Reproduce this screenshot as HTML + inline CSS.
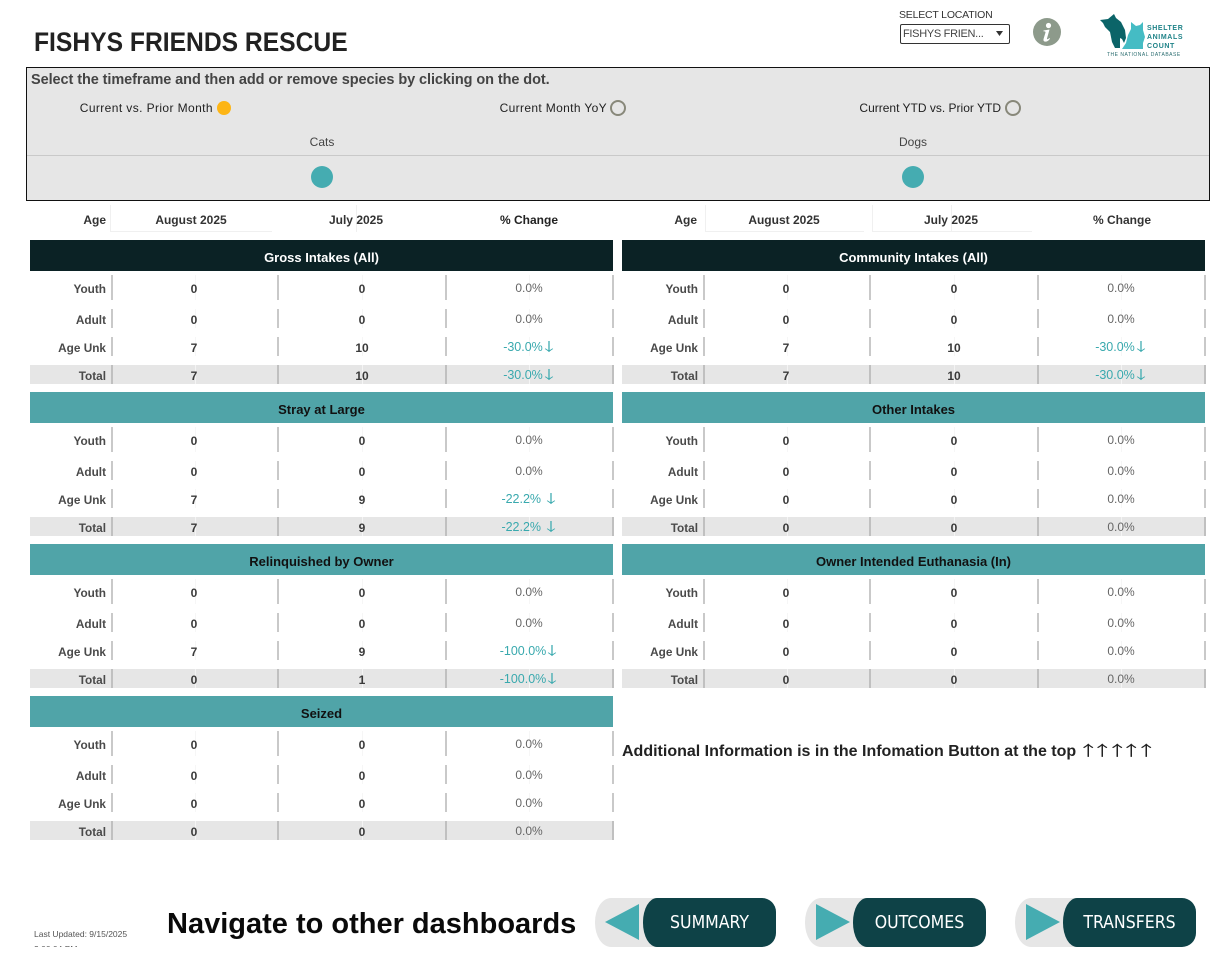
<!DOCTYPE html>
<html lang="en"><head><meta charset="utf-8"><title>Fishys Friends Rescue</title>
<style>
html,body{margin:0;padding:0;background:#fff}
#p{position:relative;width:1230px;height:959px;overflow:hidden;background:#fff;font-family:"Liberation Sans",sans-serif;color:#333}
#p div,#p span{position:absolute;white-space:nowrap}
.t{line-height:16px;height:16px}
.ctr{text-align:center;width:240px}
.rt{text-align:right;width:200px}
.pn{width:584px;height:144px}
.h{left:0;top:0;width:583px;height:31px;line-height:35px;text-align:center;font-size:13px;font-weight:700;background:#50a4a8;color:#111}
.h.d{background:#0b2225;color:#fff}
.r{left:0;width:584px;background-repeat:no-repeat;font-size:12px;
background-image:linear-gradient(#c9c9c9,#c9c9c9),linear-gradient(#c9c9c9,#c9c9c9),linear-gradient(#c9c9c9,#c9c9c9),linear-gradient(#c9c9c9,#c9c9c9),linear-gradient(#f6f6f6,#f6f6f6),linear-gradient(#f6f6f6,#f6f6f6),linear-gradient(#f6f6f6,#f6f6f6);
background-size:2px 100%,2px 100%,2px 100%,2px 100%,1px 100%,1px 100%,1px 100%;
background-position:81px 0,247px 0,415px 0,582px 0,165px 0,332px 0,499px 0}
.r1{top:35px;height:25px;line-height:26px}
.r2{top:69px;height:19px;line-height:21px}
.r3{top:97px;height:19px;line-height:21px}
.r4{top:125px;height:19px;line-height:21px;background-color:#e6e6e6;
background-image:linear-gradient(#c0c0c0,#c0c0c0),linear-gradient(#c0c0c0,#c0c0c0),linear-gradient(#c0c0c0,#c0c0c0),linear-gradient(#c0c0c0,#c0c0c0),linear-gradient(#f4f4f4,#f4f4f4),linear-gradient(#f4f4f4,#f4f4f4),linear-gradient(#f4f4f4,#f4f4f4)}
.r span{top:0}
.r span.a,.r span.b{top:1px}
.l{left:0;width:76px;text-align:right;color:#4a4a4a;font-weight:700;font-size:11.800px}
.r span.l{top:1px}
.a,.b{width:100px;text-align:center;font-weight:700;color:#3a3a3a;font-size:12px}
.a{left:114px}.b{left:282px}
.c{left:449px;width:100px;text-align:center;color:#666;font-size:12px}
.c.g{color:#39a9ae;font-size:12.500px}
i{font-style:normal;font-family:"Noto Sans CJK JP",sans-serif;line-height:0;display:inline-block;transform:scaleX(1.5)}
.c.g i{font-size:12px}
.up{font-weight:400;font-size:14.500px}
.hd{font-size:12px;font-weight:700;color:#333;top:212px}
.ln{background:#f0f0f0}
.btn{height:49px;top:898px}
.gy{background:#e6e6e6;width:70px;border-radius:16px 0 0 16px / 24px 0 0 24px}
.dk{background:#0e4247;width:133px;border-radius:14px 14px 14px 14px / 24px 14px 14px 24px;color:#fff;text-align:center;line-height:51px;font-size:17.500px;font-family:"DejaVu Sans Condensed","DejaVu Sans","Liberation Sans",sans-serif}
</style></head><body><div id="p">

<div class="t" style="left:34px;top:26px;height:32px;line-height:32px;font-size:27px;font-weight:700;color:#222;transform:scaleX(.913);transform-origin:0 50%">FISHYS FRIENDS RESCUE</div>

<div class="t" style="left:899px;top:7px;font-size:10.500px;letter-spacing:-.2px;color:#333">SELECT LOCATION</div>
<div style="left:900px;top:24px;width:108px;height:18px;border:1px solid #333;border-radius:2px;background:#fff"></div>
<div class="t" style="left:903px;top:26px;font-size:11px;letter-spacing:-.3px;color:#444">FISHYS FRIEN...</div>
<svg style="position:absolute;left:996px;top:31px" width="8" height="6"><path d="M0 0H7L3.500 5Z" fill="#333"/></svg>

<svg style="position:absolute;left:1033px;top:18px" width="28" height="28" viewBox="0 0 28 28">
<circle cx="14" cy="14" r="14" fill="#8d9a8b"/>
<circle cx="15.500" cy="7.500" r="2.600" fill="#fff"/>
<path d="M10.500 12.500L16.500 11.500L14 20.500C13.800 21.500 14.800 21.500 16.500 20L17 20.800C15 23.500 13 24 11.500 23.500C10.300 23 10.300 21.800 10.700 20.500L12.500 14.500C12.700 13.500 11.800 13.300 10.500 13.400Z" fill="#fff"/>
</svg>

<svg style="position:absolute;left:1095px;top:10px" width="95" height="50" viewBox="0 0 95 50">
<path d="M5 10L13 9L19 4L21 8L26 12L30 20L31 28L29 33L27 29L25 28L25 38L20 38L17 32L15 22L10 17L8 13Z" fill="#0b6468"/>
<path d="M27 39L31 33L33 25L36 19L36 12L41 16L45 15L48 12L48 20L50 27L48 33L48 39Z" fill="#45bcc4"/>
<text x="52" y="20" font-family="Liberation Sans,sans-serif" font-size="7" font-weight="700" letter-spacing=".6" fill="#1f8388">SHELTER</text>
<text x="52" y="29" font-family="Liberation Sans,sans-serif" font-size="7" font-weight="700" letter-spacing=".6" fill="#1f8388">ANIMALS</text>
<text x="52" y="38" font-family="Liberation Sans,sans-serif" font-size="7" font-weight="700" letter-spacing=".6" fill="#1f8388">COUNT</text>
<text x="12" y="46" font-family="Liberation Sans,sans-serif" font-size="5" letter-spacing=".5" fill="#2b6d70">THE NATIONAL DATABASE</text>
</svg>

<div style="left:26px;top:67px;width:1182px;height:132px;border:1px solid #111;background:#e6e6e6"></div>
<div style="left:27px;top:155px;width:1182px;height:1px;background:#c9c9c9"></div>
<div class="t" style="left:31px;top:72px;font-size:14.500px;letter-spacing:-.08px;font-weight:700;color:#444">Select the timeframe and then add or remove species by clicking on the dot.</div>
<div class="t rt" style="left:13px;top:100px;font-size:12px;letter-spacing:.4px;color:#222">Current vs. Prior Month</div>
<div style="left:217px;top:101px;width:14px;height:14px;border-radius:50%;background:#fdb515"></div>
<div class="t rt" style="left:407px;top:100px;font-size:12px;letter-spacing:.35px;color:#222">Current Month YoY</div>
<div style="left:610px;top:100px;width:12px;height:12px;border-radius:50%;border:2px solid #88887a"></div>
<div class="t rt" style="left:801px;top:100px;font-size:12px;color:#222">Current YTD vs. Prior YTD</div>
<div style="left:1005px;top:100px;width:12px;height:12px;border-radius:50%;border:2px solid #88887a"></div>
<div class="t ctr" style="left:202px;top:134px;font-size:12px;color:#444">Cats</div>
<div class="t ctr" style="left:793px;top:134px;font-size:12px;color:#444">Dogs</div>
<div style="left:311px;top:166px;width:22px;height:22px;border-radius:50%;background:#45acb1"></div>
<div style="left:902px;top:166px;width:22px;height:22px;border-radius:50%;background:#45acb1"></div>

<div class="ln" style="left:110px;top:205px;width:1px;height:27px"></div>
<div class="ln" style="left:110px;top:231px;width:162px;height:1px"></div>
<div class="ln" style="left:356px;top:205px;width:1px;height:27px"></div>
<div class="ln" style="left:705px;top:205px;width:1px;height:27px"></div>
<div class="ln" style="left:705px;top:231px;width:159px;height:1px"></div>
<div class="ln" style="left:872px;top:205px;width:1px;height:27px"></div>
<div class="ln" style="left:872px;top:231px;width:160px;height:1px"></div>
<div class="ln" style="left:951px;top:205px;width:1px;height:27px"></div>
<div class="t hd rt" style="left:-94px">Age</div>
<div class="t hd ctr" style="left:71px">August 2025</div>
<div class="t hd ctr" style="left:236px">July 2025</div>
<div class="t hd ctr" style="left:409px;color:#222">% Change</div>
<div class="t hd rt" style="left:497px">Age</div>
<div class="t hd ctr" style="left:664px">August 2025</div>
<div class="t hd ctr" style="left:831px">July 2025</div>
<div class="t hd ctr" style="left:1002px">% Change</div>

<div class="pn" style="left:30px;top:240px"><div class="h d">Gross Intakes (All)</div>
<div class="r r1"><span class="l">Youth</span><span class="a">0</span><span class="b">0</span><span class="c">0.0%</span></div>
<div class="r r2"><span class="l">Adult</span><span class="a">0</span><span class="b">0</span><span class="c">0.0%</span></div>
<div class="r r3"><span class="l">Age Unk</span><span class="a">7</span><span class="b">10</span><span class="c g">-30.0%<i>↓</i></span></div>
<div class="r r4"><span class="l">Total</span><span class="a">7</span><span class="b">10</span><span class="c g">-30.0%<i>↓</i></span></div></div>

<div class="pn" style="left:622px;top:240px"><div class="h d">Community Intakes (All)</div>
<div class="r r1"><span class="l">Youth</span><span class="a">0</span><span class="b">0</span><span class="c">0.0%</span></div>
<div class="r r2"><span class="l">Adult</span><span class="a">0</span><span class="b">0</span><span class="c">0.0%</span></div>
<div class="r r3"><span class="l">Age Unk</span><span class="a">7</span><span class="b">10</span><span class="c g">-30.0%<i>↓</i></span></div>
<div class="r r4"><span class="l">Total</span><span class="a">7</span><span class="b">10</span><span class="c g">-30.0%<i>↓</i></span></div></div>

<div class="pn" style="left:30px;top:392px"><div class="h">Stray at Large</div>
<div class="r r1"><span class="l">Youth</span><span class="a">0</span><span class="b">0</span><span class="c">0.0%</span></div>
<div class="r r2"><span class="l">Adult</span><span class="a">0</span><span class="b">0</span><span class="c">0.0%</span></div>
<div class="r r3"><span class="l">Age Unk</span><span class="a">7</span><span class="b">9</span><span class="c g">-22.2% <i>↓</i></span></div>
<div class="r r4"><span class="l">Total</span><span class="a">7</span><span class="b">9</span><span class="c g">-22.2% <i>↓</i></span></div></div>

<div class="pn" style="left:622px;top:392px"><div class="h">Other Intakes</div>
<div class="r r1"><span class="l">Youth</span><span class="a">0</span><span class="b">0</span><span class="c">0.0%</span></div>
<div class="r r2"><span class="l">Adult</span><span class="a">0</span><span class="b">0</span><span class="c">0.0%</span></div>
<div class="r r3"><span class="l">Age Unk</span><span class="a">0</span><span class="b">0</span><span class="c">0.0%</span></div>
<div class="r r4"><span class="l">Total</span><span class="a">0</span><span class="b">0</span><span class="c">0.0%</span></div></div>

<div class="pn" style="left:30px;top:544px"><div class="h">Relinquished by Owner</div>
<div class="r r1"><span class="l">Youth</span><span class="a">0</span><span class="b">0</span><span class="c">0.0%</span></div>
<div class="r r2"><span class="l">Adult</span><span class="a">0</span><span class="b">0</span><span class="c">0.0%</span></div>
<div class="r r3"><span class="l">Age Unk</span><span class="a">7</span><span class="b">9</span><span class="c g">-100.0%<i>↓</i></span></div>
<div class="r r4"><span class="l">Total</span><span class="a">0</span><span class="b">1</span><span class="c g">-100.0%<i>↓</i></span></div></div>

<div class="pn" style="left:622px;top:544px"><div class="h">Owner Intended Euthanasia (In)</div>
<div class="r r1"><span class="l">Youth</span><span class="a">0</span><span class="b">0</span><span class="c">0.0%</span></div>
<div class="r r2"><span class="l">Adult</span><span class="a">0</span><span class="b">0</span><span class="c">0.0%</span></div>
<div class="r r3"><span class="l">Age Unk</span><span class="a">0</span><span class="b">0</span><span class="c">0.0%</span></div>
<div class="r r4"><span class="l">Total</span><span class="a">0</span><span class="b">0</span><span class="c">0.0%</span></div></div>

<div class="pn" style="left:30px;top:696px"><div class="h">Seized</div>
<div class="r r1"><span class="l">Youth</span><span class="a">0</span><span class="b">0</span><span class="c">0.0%</span></div>
<div class="r r2"><span class="l">Adult</span><span class="a">0</span><span class="b">0</span><span class="c">0.0%</span></div>
<div class="r r3"><span class="l">Age Unk</span><span class="a">0</span><span class="b">0</span><span class="c">0.0%</span></div>
<div class="r r4"><span class="l">Total</span><span class="a">0</span><span class="b">0</span><span class="c">0.0%</span></div></div>

<div class="t" style="left:622px;top:742px;height:20px;line-height:20px;font-size:16px;font-weight:700;color:#222">Additional Information is in the Infomation Button at the top <i class="up">↑</i><i class="up">↑</i><i class="up">↑</i><i class="up">↑</i><i class="up">↑</i></div>

<div style="left:34px;top:927px;width:120px;height:20px;overflow:hidden;font-size:8.500px;line-height:15px;color:#555;white-space:normal">Last Updated: 9/15/2025<br>3:00:04 PM</div>
<div class="t" style="left:167px;top:906px;height:36px;line-height:36px;font-size:29px;font-weight:700;color:#0a0a0a">Navigate to other dashboards</div>

<div class="btn gy" style="left:595px"></div>
<svg style="position:absolute;left:605px;top:904px" width="35" height="36"><path d="M0 18L34 0V36Z" fill="#45acb1"/></svg>
<div class="btn dk" style="left:643px">SUMMARY</div>

<div class="btn gy" style="left:805px"></div>
<svg style="position:absolute;left:815px;top:904px" width="35" height="36"><path d="M1 0L35 18L1 36Z" fill="#45acb1"/></svg>
<div class="btn dk" style="left:853px">OUTCOMES</div>

<div class="btn gy" style="left:1015px"></div>
<svg style="position:absolute;left:1025px;top:904px" width="35" height="36"><path d="M1 0L35 18L1 36Z" fill="#45acb1"/></svg>
<div class="btn dk" style="left:1063px">TRANSFERS</div>

</div></body></html>
